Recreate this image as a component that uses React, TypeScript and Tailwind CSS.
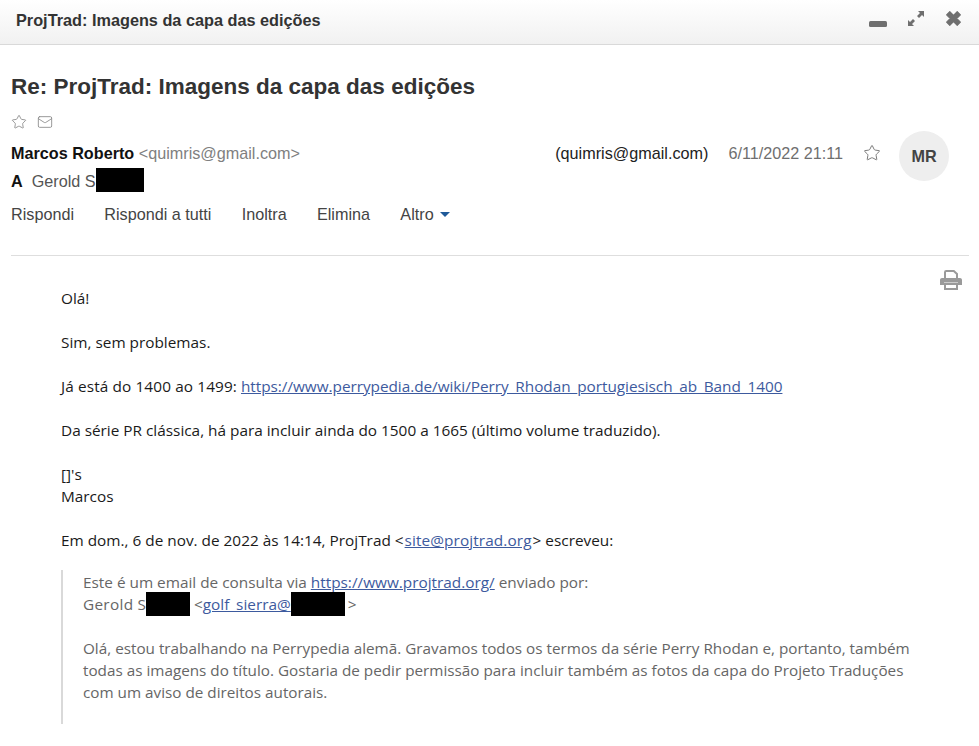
import { Mail, Star } from "lucide-react";

const sans = "font-['Liberation_Sans',Arial,sans-serif]";
const body = "font-['Open_Sans','Noto_Sans',sans-serif]";
const linkCls = "text-[#3d5a9e] underline";

function Redacted({ className }: { className: string }) {
  return <span className={`inline-block h-6 shrink-0 bg-black ${className}`} />;
}

function WindowIcons() {
  return (
    <div className="flex items-center">
      <svg width="18" height="6" viewBox="0 0 18 6" className="mt-[8px]">
        <rect x="0" y="0" width="18" height="6" rx="1.5" fill="#6f6f6f" />
      </svg>
      <svg width="18" height="17" viewBox="0 0 18 17" className="ml-[20px] -mt-[4px]">
        <path d="M11 1h6v6l-2-2-3 3-2-2 3-3zM1 16v-6l2 2 3-3 2 2-3 3 2 2z" fill="#6f6f6f" />
      </svg>
      <svg width="17" height="17" viewBox="0 0 16 16" className="ml-[20px] -mt-[3px]">
        <path d="M1.500 4.500l3-3L8 5l3.500-3.500 3 3L11 8l3.500 3.500-3 3L8 11l-3.500 3.500-3-3L5 8z" fill="#6f6f6f" stroke="#6f6f6f" strokeWidth="1" strokeLinejoin="round" />
      </svg>
    </div>
  );
}

function PrintIcon() {
  return (
    <svg width="22" height="20" viewBox="0 0 22 20">
      <path d="M5 8V2.200C5 1.500 5.500 1 6.200 1h7.600L17 4v4" fill="none" stroke="#9a9a9a" strokeWidth="2" />
      <path d="M2 8h18c1.100 0 2 .9 2 2v5h-4v-2.500H4V15H0v-5c0-1.100.9-2 2-2z" fill="#9a9a9a" />
      <path d="M5 14h12v5H5z" fill="none" stroke="#9a9a9a" strokeWidth="2" />
    </svg>
  );
}

export default function App() {
  return (
    <div className={`h-[746px] w-[979px] overflow-hidden bg-white ${sans}`}>
      <header className="flex h-[45px] items-center justify-between border-b border-[#d9d9d9] bg-gradient-to-b from-white to-[#f1f1f1] pr-[17px] pb-[4px] pl-4">
        <h1 className="text-[16.27px] font-bold text-[#333]">ProjTrad: Imagens da capa das edições</h1>
        <WindowIcons />
      </header>

      <div className="pr-[10px] pl-[11px]">
        <h2 className="mt-[26px] text-[22.5px] leading-[32px] font-bold text-[#333]">
          Re: ProjTrad: Imagens da capa das edições
        </h2>
        <div className="mt-[11px] flex h-4 items-center gap-[10px] text-[#8a8a8a]">
          <Star size={16} strokeWidth={1.3} />
          <Mail size={16} strokeWidth={1.3} />
        </div>

        <div className="relative mt-[10px] border-b border-[#dedede] pb-[29px] text-[16.2px]">
          <div className="h-[28px] leading-[26px]">
            <span className="font-bold text-[#111]">Marcos Roberto</span>{" "}
            <span className="text-[#808080]">&lt;quimris@gmail.com&gt;</span>
          </div>
          <div className="mt-[1px] flex h-6 items-center">
            <b className="text-[#111]">A</b>
            <span className="ml-[9px] text-[#555]">Gerold S</span>
            <Redacted className="-mt-[2px] ml-0 w-12" />
          </div>
          <nav className="mt-[9px] flex gap-[30.3px] leading-6 text-[#444]">
            <span>Rispondi</span>
            <span>Rispondi a tutti</span>
            <span>Inoltra</span>
            <span>Elimina</span>
            <span className="flex items-center gap-[6px]">
              Altro
              <span className="h-0 w-0 border-x-[5px] border-t-[5px] border-x-transparent border-t-[#1f5a99]" />
            </span>
          </nav>

          <div className="absolute top-[-15px] right-[20px] flex items-center">
            <span className="text-[#222]">(quimris@gmail.com)</span>
            <span className="ml-5 text-[#6f6f6f]">6/11/2022 21:11</span>
            <Star size={18} strokeWidth={1.3} className="ml-[20px] text-[#777]" />
            <span className="mt-[6px] ml-[18px] flex h-[50px] w-[50px] items-center justify-center rounded-full bg-[#eeeeee] font-bold text-[#444]">
              MR
            </span>
          </div>
        </div>
      </div>

      <div className={`relative pt-[31px] pl-[61px] text-[15.35px] leading-[22px] text-[#1a1a1a] ${body}`}>
        <div className="absolute top-[14px] right-[17px]">
          <PrintIcon />
        </div>
        <p>Olá!</p>
        <p className="mt-[22px]">Sim, sem problemas.</p>
        <p className="mt-[22px]">
          <span className="tracking-[0.12px]">Já está do 1400 ao 1499:</span>{" "}
          <span className={`${linkCls} tracking-[-0.04px]`}>https://www.perrypedia.de/wiki/Perry_Rhodan_portugiesisch_ab_Band_1400</span>
        </p>
        <p className="mt-[22px]">Da série PR clássica, há para incluir ainda do 1500 a 1665 (último volume traduzido).</p>
        <p className="mt-[22px]">[]'s</p>
        <p>Marcos</p>
        <p className="mt-[22px]">
          Em dom., 6 de nov. de 2022 às 14:14, ProjTrad &lt;<span className={`${linkCls} ml-px tracking-[0.1px]`}>site@projtrad.org</span>
          <span className="ml-px">&gt;</span> escreveu:
        </p>

        <blockquote className="mt-[19px] h-[154px] w-[860px] border-l-2 border-[#d9d9d9] pt-[1px] pl-5 text-[#666]">
          <p>
            Este é um email de consulta via <span className={linkCls}>https://www.projtrad.org/</span> enviado por:
          </p>
          <p className="flex h-[22px] items-center">
            <span className="w-[63px] whitespace-nowrap tracking-[0.3px]">Gerold Sc</span>
            <Redacted className="w-[44px]" />
            <span className="ml-[4px]">&lt;</span>
            <span className={linkCls}>golf_sierra@</span>
            <Redacted className="w-[54px]" />
            <span className="ml-[3px]">&gt;</span>
          </p>
          <p className="mt-[22px] text-[15.28px]">
            Olá, estou trabalhando na Perrypedia alemã. Gravamos todos os termos da série Perry Rhodan e, portanto, também todas as imagens do título. Gostaria de pedir permissão para incluir também as fotos da capa do Projeto Traduções com um aviso de direitos autorais.
          </p>
        </blockquote>
      </div>
    </div>
  );
}
